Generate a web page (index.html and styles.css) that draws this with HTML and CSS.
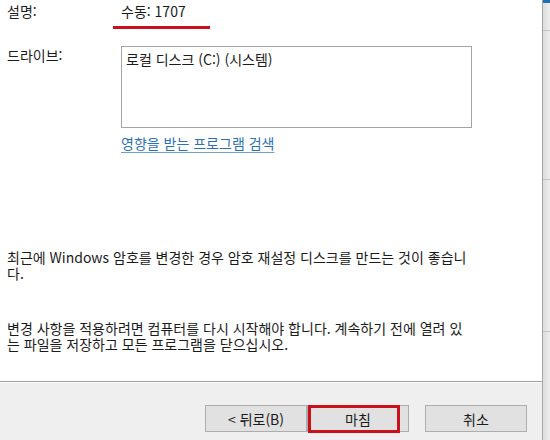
FILE: index.html
```html
<!DOCTYPE html>
<html lang="ko">
<head>
<meta charset="UTF-8">
<title>시스템 복원</title>
<link rel="stylesheet" href="styles.css">
</head>
<body>

<div class="dialog">
	<div class="page">
		<div class="fields">
			<div class="label">설명:</div>
			<div class="value">
				<span>수동: 1707</span>
				<div class="mark"></div>
			</div>

			<div class="label drive-label">드라이브:</div>
			<div class="value">
				<div class="listbox">로컬 디스크 (C:) (시스템)</div>
				<a class="link" href="#">영향을 받는 프로그램 검색</a>
			</div>
		</div>

		<p class="note first">최근에 Windows 암호를 변경한 경우 암호 재설정 디스크를 만드는 것이 좋습니다.</p>
		<p class="note">변경 사항을 적용하려면 컴퓨터를 다시 시작해야 합니다. 계속하기 전에 열려 있는 파일을 저장하고 모든 프로그램을 닫으십시오.</p>
	</div>

	<div class="buttons">
		<button class="btn">&lt; 뒤로(B)</button>
		<button class="btn finish">마침</button>
		<button class="btn cancel">취소</button>
	</div>
</div>

<div class="behind">
	<div class="behind-cap"></div>
	<div class="behind-pane one"></div>
	<div class="behind-pane two"></div>
	<div class="behind-pane three"></div>
</div>

</body>
</html>
```

FILE: styles.css
```css
html, body {
	margin: 0;
	height: 100%;
}
body {
	display: flex;
	font-family: "Noto Sans CJK KR", "Noto Sans", sans-serif;
	font-size: 14px;
	color: #1b1b1b;
	overflow: hidden;
}

.dialog {
	width: 542px;
	display: flex;
	flex-direction: column;
	border-right: 1px solid #a7a7a7;
}

.page {
	height: 382px;
	background: #fff;
	border-bottom: 1px solid #a0a0a0;
	padding-left: 7px;
	box-sizing: border-box;
}

.fields {
	display: grid;
	grid-template-columns: 114px 351px;
	padding-top: 3px;
}
.label {
	line-height: 17px;
}
.value {
	line-height: 17px;
}
.mark {
	width: 97px;
	height: 3px;
	margin: 6px 0 0 -8px;
	background: #c8111b;
}
.drive-label {
	margin-top: 18px;
}
.value .listbox {
	margin-top: 17px;
	height: 82px;
	box-sizing: border-box;
	border: 1px solid #a5a5a5;
	padding: 4px 4px;
	line-height: 17px;
}
.link {
	display: inline-block;
	margin-top: 7px;
	color: #2b71b8;
	text-decoration: underline;
	text-underline-offset: 3px;
	text-decoration-color: #6f9fcc;
}

.note {
	width: 466px;
	margin: 0;
	line-height: 16px;
}
.note.first {
	margin-top: 97px;
	margin-bottom: 39px;
}

.buttons {
	flex: 1;
	background: #efefef;
	border-top: 1px solid #fafafa;
	display: flex;
	align-items: flex-start;
	padding: 22px 0 0 205px;
}
.btn {
	width: 102px;
	height: 27px;
	margin: 0;
	border: 1px solid #adadad;
	background: #e1e1e1;
	font: inherit;
	color: #1b1b1b;
	padding: 0;
}
.finish {
	position: relative;
}
.finish::after {
	content: "";
	position: absolute;
	left: 0;
	top: -1px;
	width: 92px;
	height: 28px;
	box-sizing: border-box;
	border: 3px solid #c8111b;
}
.cancel {
	margin-left: 16px;
}

.behind {
	flex: 1;
	background: linear-gradient(to right, #dcdcdc, #eeeeee);
	display: flex;
	flex-direction: column;
}
.behind-cap {
	height: 3px;
	background: #1f6fb4;
}
.behind-pane {
	border-bottom: 1px solid #c2c2c2;
}
.behind-pane.one {
	height: 27px;
}
.behind-pane.two {
	height: 148px;
}
.behind-pane.three {
	height: 151px;
}
```
